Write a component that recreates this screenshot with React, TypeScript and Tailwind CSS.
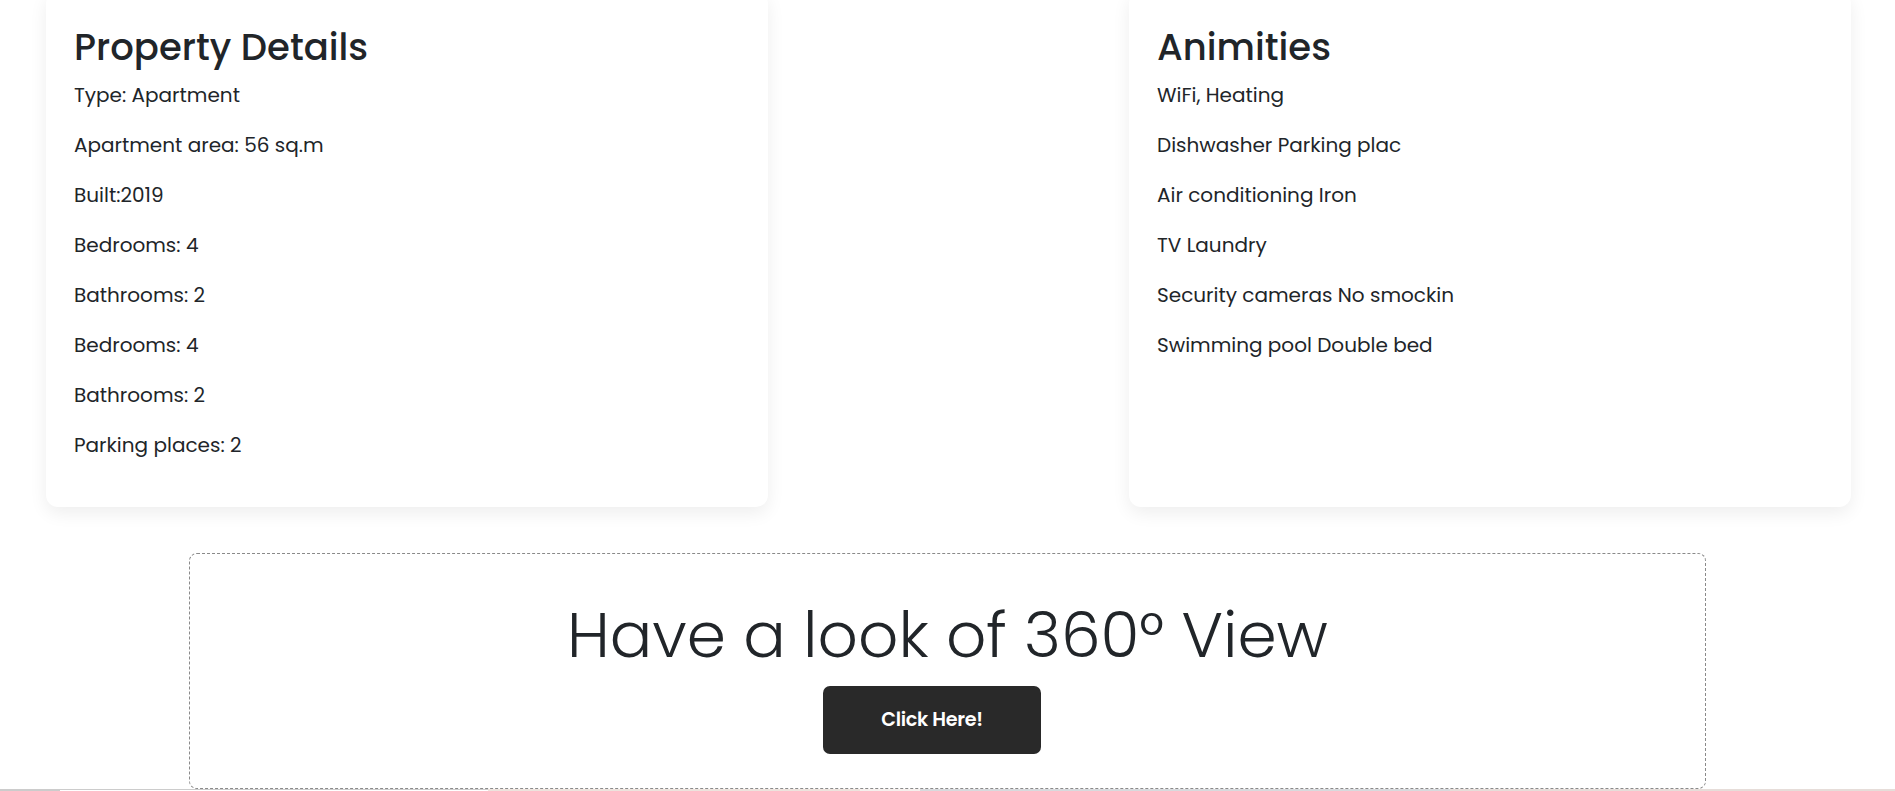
const details = [
  'Type: Apartment',
  'Apartment area: 56 sq.m',
  'Built:2019',
  'Bedrooms: 4',
  'Bathrooms: 2',
  'Bedrooms: 4',
  'Bathrooms: 2',
  'Parking places: 2',
];

const amenities = [
  'WiFi, Heating',
  'Dishwasher Parking plac',
  'Air conditioning Iron',
  'TV Laundry',
  'Security cameras No smockin',
  'Swimming pool Double bed',
];

function InfoCard({ title, items }: { title: string; items: string[] }) {
  return (
    <div className="w-[722px] rounded-xl bg-white px-[28px] pt-[31px] pb-[27px] shadow-[0_6px_18px_rgba(0,0,0,0.07)]">
      <h1 className="mb-[9px] text-[37px] leading-[48px] font-medium text-[#212529]">{title}</h1>
      {items.map((t, i) => (
        <p key={i} className="mb-[20px] text-[20px] leading-[1.5] text-[#212529]">
          {t}
        </p>
      ))}
    </div>
  );
}

export default function App() {
  return (
    <div className="min-h-screen overflow-hidden bg-white font-['Poppins','Inter',sans-serif]">
      {/* details + amenities */}
      <div className="-mt-[8px] flex items-stretch justify-between pl-[46px] pr-[44px]">
        <InfoCard title="Property Details" items={details} />
        <InfoCard title="Animities" items={amenities} />
      </div>

      {/* 360 view */}
      <div className="mx-auto mt-[46px] w-[1517px] rounded-lg border border-dashed border-[#8a8a8a] pt-[43px] pb-[34px] text-center">
        <h2 className="mb-[13px] text-[63px] leading-[76px] font-light text-[#212529]">Have a look of 360° View</h2>
        <div className="flex justify-center">
          <button className="mr-[31px] h-[68px] w-[218px] rounded-[7px] bg-[#292929] text-[19.2px] font-semibold tracking-[-0.3px] text-white">
            Click Here!
          </button>
        </div>
      </div>

      {/* top edge of next section */}
      <div className="flex h-[3px]">
        <div className="w-[60px] bg-[#cccccc]" />
        <div className="w-[428px] border-t border-[#cccccc] bg-white" />
        <div className="w-[372px] bg-[#ede3dd]" />
        <div className="w-[60px] bg-[#f5efec]" />
        <div className="w-[530px] bg-[#d8dadd]" />
        <div className="flex-1 bg-[#e6ddd9]" />
      </div>
    </div>
  );
}
